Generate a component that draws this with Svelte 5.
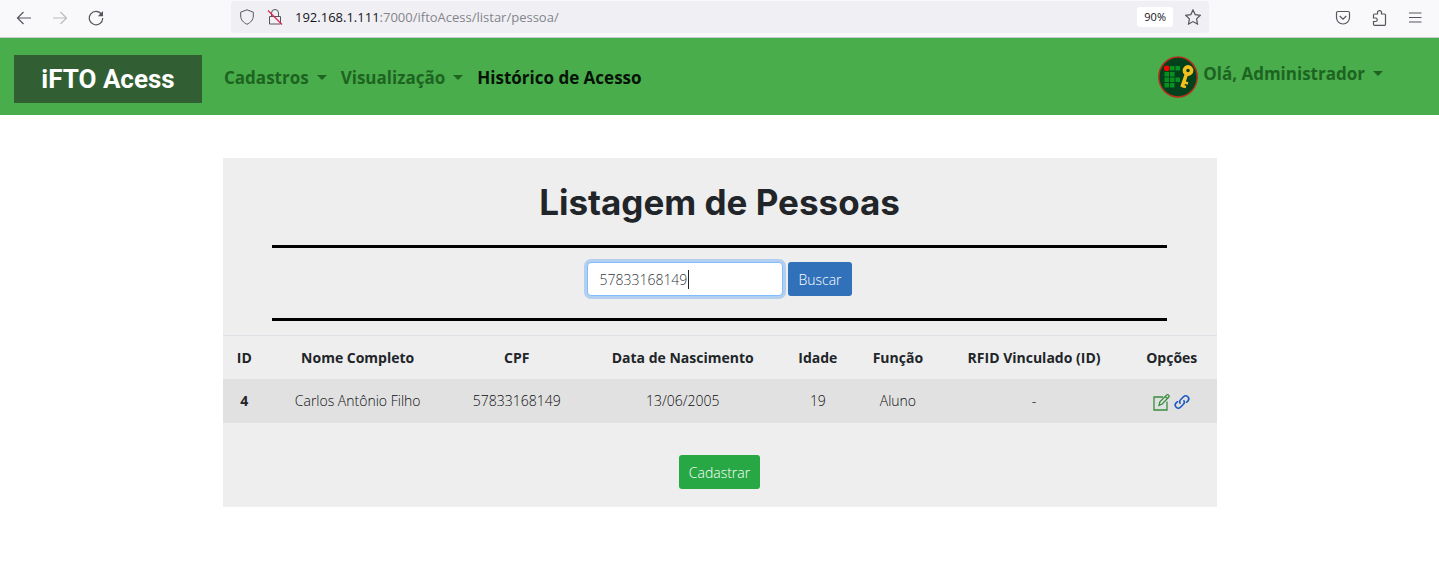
<script>
  let query = $state('57833168149');

  const columns = [
    { title: 'ID', width: 4.4 },
    { title: 'Nome Completo', width: 18.4 },
    { title: 'CPF', width: 13.6 },
    { title: 'Data de Nascimento', width: 19.8 },
    { title: 'Idade', width: 7.4 },
    { title: 'Função', width: 8.7 },
    { title: 'RFID Vinculado (ID)', width: 18.7 },
    { title: 'Opções', width: 9 }
  ];

  const people = [
    { id: 4, name: 'Carlos Antônio Filho', cpf: '57833168149', birth: '13/06/2005', age: 19, role: 'Aluno', rfid: '-' }
  ];
</script>

<div class="browser">
  <div class="nav-tools">
    <button class="tool" aria-label="Voltar">
      <svg viewBox="0 0 16 16"><path d="M15 8H1.5M7.500 2 1.500 8l6 6" /></svg>
    </button>
    <button class="tool faded" aria-label="Avançar">
      <svg viewBox="0 0 16 16"><path d="M1 8h13.500M8.500 2l6 6-6 6" /></svg>
    </button>
    <button class="tool" aria-label="Recarregar">
      <svg viewBox="0 0 16 16"><path d="M13.500 4.300A6.700 6.700 0 1 0 14.700 8" /><path class="solid" d="M15 1v5.200H9.800z" /></svg>
    </button>
  </div>
  <div class="address">
    <svg viewBox="0 0 16 16"><path d="M8 .8 14.300 3.200V7c0 4-2.800 6.600-6.300 8.300C4.500 13.600 1.700 11 1.700 7V3.200z" /></svg>
    <svg viewBox="0 0 16 16"><path d="M4.500 7.500V4a3.500 3.500 0 0 1 7 0v3.500M2.500 7.500h11v7.500h-11z" /><path class="slash" d="M1 1.500 15 15.500" /></svg>
    <span class="url">192.168.1.111<span>:7000/iftoAcess/listar/pessoa/</span></span>
    <button class="zoom">90%</button>
    <button class="tool" aria-label="Favoritar">
      <svg viewBox="0 0 16 16"><path d="m8 .9 2.200 4.700 5.100.7-3.700 3.600.9 5.200L8 12.600l-4.500 2.500.9-5.200L.7 6.300l5.100-.7z" /></svg>
    </button>
  </div>
  <div class="side-tools">
    <button class="tool" aria-label="Pocket">
      <svg viewBox="0 0 16 16"><path d="M3 1.500h10a1.500 1.500 0 0 1 1.500 1.500V7.500a6.500 6.500 0 0 1-13 0V3A1.500 1.500 0 0 1 3 1.500zM4.700 6 8 9.200 11.300 6" /></svg>
    </button>
    <button class="tool" aria-label="Extensões">
      <svg viewBox="0 0 16 16"><path d="M2.500 7.500V5a1 1 0 0 1 1-1h3V2.600a2 2 0 0 1 4 0V4h3a1 1 0 0 1 1 1v9.300a1 1 0 0 1-1 1h-10a1 1 0 0 1-1-1V11.500h2a1.700 1.700 0 0 0 0-3.500h-2z" /></svg>
    </button>
    <button class="tool" aria-label="Menu">
      <svg viewBox="0 0 16 16"><path d="M2 3h12.500M2 7.500h12.500M2 12h12.500" /></svg>
    </button>
  </div>
</div>

<header>
  <a class="brand" href="#inicio">iFTO Acess</a>
  <nav>
    <button class="link">Cadastros<i></i></button>
    <button class="link">Visualização<i></i></button>
    <a class="link active" href="#historico">Histórico de Acesso</a>
  </nav>
  <div class="user">
    <svg class="avatar" viewBox="0 0 40 42">
      <ellipse cx="20" cy="21" rx="19.200" ry="20" fill="#03401c" stroke="#b62f1c" stroke-width="1.500" />
      <path fill="#079220" d="M12 10h4.500v4.500H12zM17.500 10H22v4.500h-4.500zM6.500 16H11v4.500H6.500zM12 16h4.500v4.500H12zM6.500 21.500H11V26H6.500zM12 21.500h4.500V26H12zM17.500 21.500H22V26h-4.500zM6.500 27H11v4.500H6.500zM12 27h4.500v4.500H12z" />
      <circle cx="8.800" cy="12.300" r="2.800" fill="#f00" />
      <g fill="none" stroke="#f4c01e">
        <circle cx="30" cy="14.500" r="3.600" stroke-width="3.600" />
        <path d="m28.500 18-4.500 13" stroke-width="3.600" />
        <path d="m25.500 26 4.500 1.500M24 30l4 1" stroke-width="2.500" />
      </g>
    </svg>
    <button class="link">Olá, Administrador<i></i></button>
  </div>
</header>

<main>
  <h1>Listagem de Pessoas</h1>
  <form class="search" onsubmit={(e) => e.preventDefault()}>
    <div class="field">
      <input aria-label="Buscar por CPF" type="text" bind:value={query} />
      <span class="caret"></span>
    </div>
    <button class="btn primary" type="submit">Buscar</button>
  </form>
  <table>
    <colgroup>
      {#each columns as column}
        <col style:width="{column.width}%" />
      {/each}
    </colgroup>
    <thead>
      <tr>
        {#each columns as column}
          <th scope="col">{column.title}</th>
        {/each}
      </tr>
    </thead>
    <tbody>
      {#each people as person}
        <tr>
          <th scope="row">{person.id}</th>
          <td>{person.name}</td>
          <td>{person.cpf}</td>
          <td>{person.birth}</td>
          <td>{person.age}</td>
          <td>{person.role}</td>
          <td>{person.rfid}</td>
          <td>
            <div class="actions">
              <a class="edit" href="#editar" aria-label="Editar">
                <svg viewBox="0 0 17 17"><path d="M10 3H1v13h13V7.500" /><path d="m6 11.300.9-3.500L13.500 1.200a1.300 1.300 0 0 1 2.100 0 1.300 1.300 0 0 1 0 2.100l-6.400 6.700zM12.500 2.700l2 2" /></svg>
              </a>
              <a class="chain" href="#vincular" aria-label="Vincular">
                <svg viewBox="0 0 16 16"><path d="M6.500 9.700A3 3 0 0 1 6.800 5.500l2.700-2.700a3 3 0 0 1 4.300 4.300l-1.700 1.700M9.500 6.300a3 3 0 0 1-.3 4.200l-2.700 2.700a3 3 0 0 1-4.300-4.300l1.700-1.700" /></svg>
              </a>
            </div>
          </td>
        </tr>
      {/each}
    </tbody>
  </table>
  <button class="btn success">Cadastrar</button>
</main>

<style>
  :global(body) {
    background: #fff;
    color: #212529;
    font: 400 14px/22px "Open Sans", "Noto Sans", sans-serif;
  }
  button {
    border: 0;
    padding: 0;
    background: none;
    color: inherit;
    font: inherit;
  }
  a {
    color: inherit;
    text-decoration: none;
  }
  svg {
    display: block;
    flex: none;
    width: 16px;
    height: 16px;
    fill: none;
    stroke: currentColor;
  }

  .browser {
    display: grid;
    grid-template-columns: 231px minmax(0, 978px) 1fr;
    box-sizing: border-box;
    height: 38px;
    padding-bottom: 4px;
    border-bottom: 1px solid #c9cdcb;
    background: #f9f9fb;
    color: #56565e;
  }
  .tool svg {
    stroke-width: 1.2;
  }
  .faded {
    color: #bbbbc1;
  }
  .solid {
    fill: currentColor;
    stroke: none;
  }
  .slash {
    stroke: #e22850;
    stroke-width: 1.300;
  }
  .nav-tools,
  .side-tools {
    display: flex;
    align-items: center;
    gap: 20px;
    padding: 2px 16px 0;
  }
  .side-tools {
    justify-content: flex-end;
  }
  .address {
    display: flex;
    align-items: center;
    gap: 12px;
    margin-top: 1px;
    padding: 0 8px;
    border-radius: 4px;
    background: #f0f0f4;
  }
  .url {
    flex: 1;
    color: #15141a;
    font-size: 13px;
    white-space: nowrap;
  }
  .url span {
    color: #84848b;
  }
  .zoom {
    padding: 0 7px;
    border-radius: 3px;
    background: #fff;
    color: #15141a;
    font-size: 11px;
    line-height: 20px;
  }

  header {
    display: flex;
    align-items: center;
    box-sizing: border-box;
    height: 77px;
    padding: 4px 56px 0 14px;
    background: #49ad4c;
  }
  .brand {
    width: 188px;
    background: #315f33;
    color: #fff;
    font: bold 26px/48px Roboto, sans-serif;
    text-align: center;
  }
  nav {
    display: flex;
    gap: 14px;
    margin: 0 0 2px 22px;
  }
  .link {
    display: flex;
    align-items: center;
    gap: 8px;
    color: #1e6421;
    font: bold 17px/24px "Open Sans", "Noto Sans", sans-serif;
    white-space: nowrap;
  }
  .link.active {
    color: #051205;
  }
  .link i {
    border: 5px solid transparent;
    border-top-color: currentColor;
    border-bottom: 0;
  }
  .user {
    display: flex;
    gap: 5px;
    margin: 0 0 4px auto;
  }
  .user .link {
    align-self: flex-start;
    margin-top: 6px;
  }
  .avatar {
    width: 40px;
    height: 42px;
    stroke: none;
  }

  main {
    display: flex;
    flex-direction: column;
    align-items: center;
    max-width: 994px;
    margin: 43px auto 0;
    padding-bottom: 18px;
    background: #eee;
    font-weight: 300;
  }
  h1 {
    margin: 22px 0 20px;
    font: bold 35px/45px Inter, sans-serif;
  }
  .search {
    display: flex;
    justify-content: center;
    gap: 5px;
    box-sizing: border-box;
    width: 90%;
    margin-bottom: 14px;
    padding: 14px 0 22px;
    border: solid #000;
    border-width: 3px 0;
  }
  .field {
    position: relative;
  }
  input {
    box-sizing: border-box;
    width: 196px;
    height: 34px;
    padding: 0 11px;
    border: 1px solid #80bdff;
    border-radius: 4px;
    outline: 0;
    background: #fff;
    box-shadow: 0 0 0 3px #b3cfef;
    color: #343a40;
    font: inherit;
  }
  .caret {
    position: absolute;
    top: 8px;
    left: 101px;
    width: 1px;
    height: 19px;
    background: #222;
  }
  .btn {
    height: 34px;
    padding: 2px 10px 0;
    border-radius: 3px;
    color: #fff;
  }
  .primary {
    background: #3071ba;
  }
  .success {
    margin-top: 32px;
    background: #28a745;
  }

  table {
    width: 100%;
    border-collapse: collapse;
    table-layout: fixed;
    text-align: center;
  }
  th,
  td {
    height: 44px;
    padding: 0;
    white-space: nowrap;
  }
  td {
    color: #0c0e10;
  }
  thead th {
    height: 43px;
  }
  thead {
    border-top: 1px solid #dee2e6;
  }
  tbody tr {
    background: #e1e1e1;
  }
  .actions {
    display: flex;
    justify-content: center;
    gap: 4px;
    padding-top: 2px;
  }
  .actions svg {
    stroke-width: 1.600;
  }
  .actions .edit {
    color: #368d3e;
  }
  .edit svg {
    width: 17px;
    height: 17px;
    stroke-width: 1.300;
  }
  .actions .chain {
    color: #1b5ac0;
  }
</style>
